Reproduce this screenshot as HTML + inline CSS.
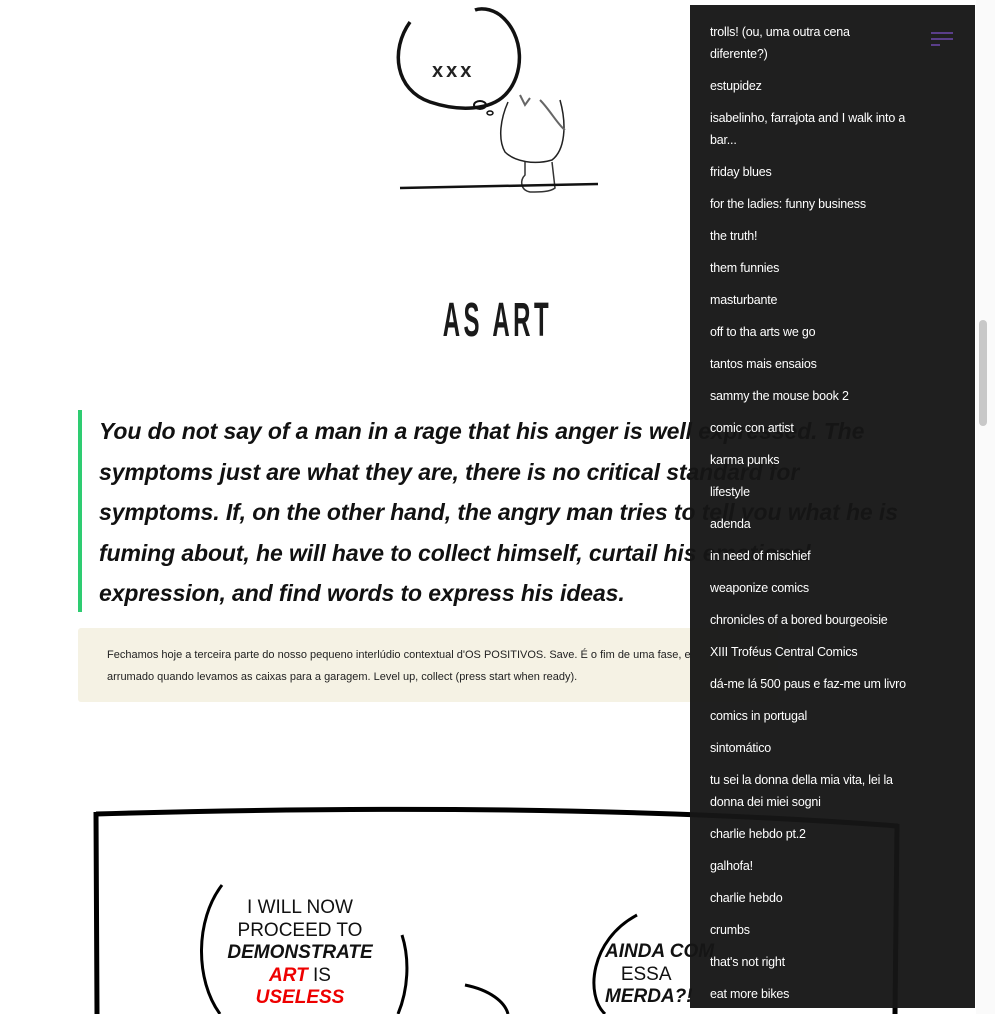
<!DOCTYPE html>
<html><head><meta charset="utf-8"><style>
*{margin:0;padding:0;box-sizing:border-box}
html,body{width:995px;height:1014px;overflow:hidden;background:#fff;font-family:"Liberation Sans",sans-serif}
.title{position:absolute;left:0;width:995px;top:293px;text-align:center;font-size:48px;color:#1a1a1a;letter-spacing:7px;font-weight:bold}
.title span{display:inline-block;transform:scaleX(0.5);transform-origin:center}
.quote{position:absolute;left:78px;top:410px;width:831px;height:202px;border-left:4px solid #2ecc71;padding-left:17px;font-style:italic;font-weight:bold;font-size:23px;letter-spacing:-0.1px;line-height:40.5px;color:#111;padding-top:1px}
.note{position:absolute;left:78px;top:628px;width:700px;height:74px;background:#f5f2e4;border-radius:3px;padding:16px 0 0 29px;font-size:11px;line-height:22px;color:#222;white-space:nowrap;overflow:hidden}
.side{position:absolute;left:690px;top:5px;width:285px;height:1003px;background:rgba(22,22,22,0.96);padding:16px 0 0 20px}
.side div{color:#fff;font-size:12.5px;letter-spacing:-0.2px;line-height:22px;margin-bottom:10px;width:198px}
.burger{position:absolute;left:931px;top:32px}
.burger i{display:block;height:2px;background:#5a3e8a;margin-bottom:4px}
.sb{position:absolute;left:979px;top:320px;width:8px;height:106px;background:#c8c8c8;border-radius:4px}
.sbt{position:absolute;left:976px;top:0;width:19px;height:1014px;background:#fafafa}
.ct{position:absolute;font-family:"Liberation Sans",sans-serif;font-size:19px;text-align:center;color:#111;line-height:22.5px}
</style></head><body>
<svg style="position:absolute;left:380px;top:0" width="240" height="200" viewBox="0 0 240 200">
<path d="M30 22 C10 50 15 90 50 102 C80 112 110 110 125 95 C145 75 145 35 120 15 C110 8 100 8 95 10" fill="none" stroke="#111" stroke-width="3.5"/>
<ellipse cx="100" cy="105" rx="6" ry="4" fill="none" stroke="#111" stroke-width="2"/>
<ellipse cx="110" cy="113" rx="3" ry="2" fill="none" stroke="#111" stroke-width="1.5"/>
<text x="52" y="77" font-family="Liberation Sans" font-weight="bold" font-size="20" fill="#222" letter-spacing="3">xxx</text>
<path d="M128 102 C120 120 118 140 125 152 C135 162 155 165 172 160 C185 150 187 125 180 100" fill="none" stroke="#222" stroke-width="1.5"/>
<path d="M140 95 L145 105 L150 98 M160 100 C170 110 178 125 185 130" fill="none" stroke="#666" stroke-width="2"/>
<path d="M145 162 L145 175 C140 180 140 190 150 192 C160 192 170 192 175 188 L172 162" fill="none" stroke="#333" stroke-width="1.5"/>
<path d="M20 188 L218 184" stroke="#111" stroke-width="2.5"/>
</svg>
<div class="title"><span>AS ART</span></div>
<div class="quote">You do not say of a man in a rage that his anger is well expressed. The symptoms just are what they are, there is no critical standard for symptoms. If, on the other hand, the angry man tries to tell you what he is fuming about, he will have to collect himself, curtail his emotional expression, and find words to express his ideas.</div>
<div class="note">Fechamos hoje a terceira parte do nosso pequeno interlúdio contextual d'OS POSITIVOS. Save. É o fim de uma fase, e<br>arrumado quando levamos as caixas para a garagem. Level up, collect (press start when ready).</div>
<svg style="position:absolute;left:0;top:790px" width="995" height="224" viewBox="0 0 995 224">
<path d="M96 24 C300 18 600 14 898 36" fill="none" stroke="#000" stroke-width="5"/>
<path d="M96 22 L97 224 M897 34 L895 224" stroke="#000" stroke-width="5"/>
<path d="M222 95 C195 130 195 190 220 224 M402 145 C410 170 408 200 398 224" fill="none" stroke="#000" stroke-width="3"/>
<path d="M637 125 C590 150 585 205 605 224" fill="none" stroke="#000" stroke-width="3"/>
<path d="M465 195 C490 200 505 212 508 224" fill="none" stroke="#000" stroke-width="3"/>
</svg>
<div class="ct" style="left:200px;top:897px;width:200px">I WILL NOW<br>PROCEED TO<br><b><i>DEMONSTRATE</i></b><br><b><i style="color:#e00">ART</i></b> IS<br><b><i style="color:#e00">USELESS</i></b></div>
<div class="ct" style="left:605px;top:941px;width:120px;text-align:left"><b><i>AINDA COM</i></b><br>&nbsp;&nbsp;&nbsp;ESSA<br><b><i>MERDA?!</i></b></div>
<div class="side">
<div>trolls! (ou, uma outra cena diferente?)</div>
<div>estupidez</div>
<div>isabelinho, farrajota and I walk into a bar...</div>
<div>friday blues</div>
<div>for the ladies: funny business</div>
<div>the truth!</div>
<div>them funnies</div>
<div>masturbante</div>
<div>off to tha arts we go</div>
<div>tantos mais ensaios</div>
<div>sammy the mouse book 2</div>
<div>comic con artist</div>
<div>karma punks</div>
<div>lifestyle</div>
<div>adenda</div>
<div>in need of mischief</div>
<div>weaponize comics</div>
<div>chronicles of a bored bourgeoisie</div>
<div>XIII Troféus Central Comics</div>
<div style="width:215px">dá-me lá 500 paus e faz-me um livro</div>
<div>comics in portugal</div>
<div>sintomático</div>
<div>tu sei la donna della mia vita, lei la donna dei miei sogni</div>
<div>charlie hebdo pt.2</div>
<div>galhofa!</div>
<div>charlie hebdo</div>
<div>crumbs</div>
<div>that's not right</div>
<div>eat more bikes</div>
</div>
<div class="burger"><i style="width:22px"></i><i style="width:22px"></i><i style="width:9px"></i></div>
<div class="sbt"></div>
<div class="sb"></div>
</body></html>
